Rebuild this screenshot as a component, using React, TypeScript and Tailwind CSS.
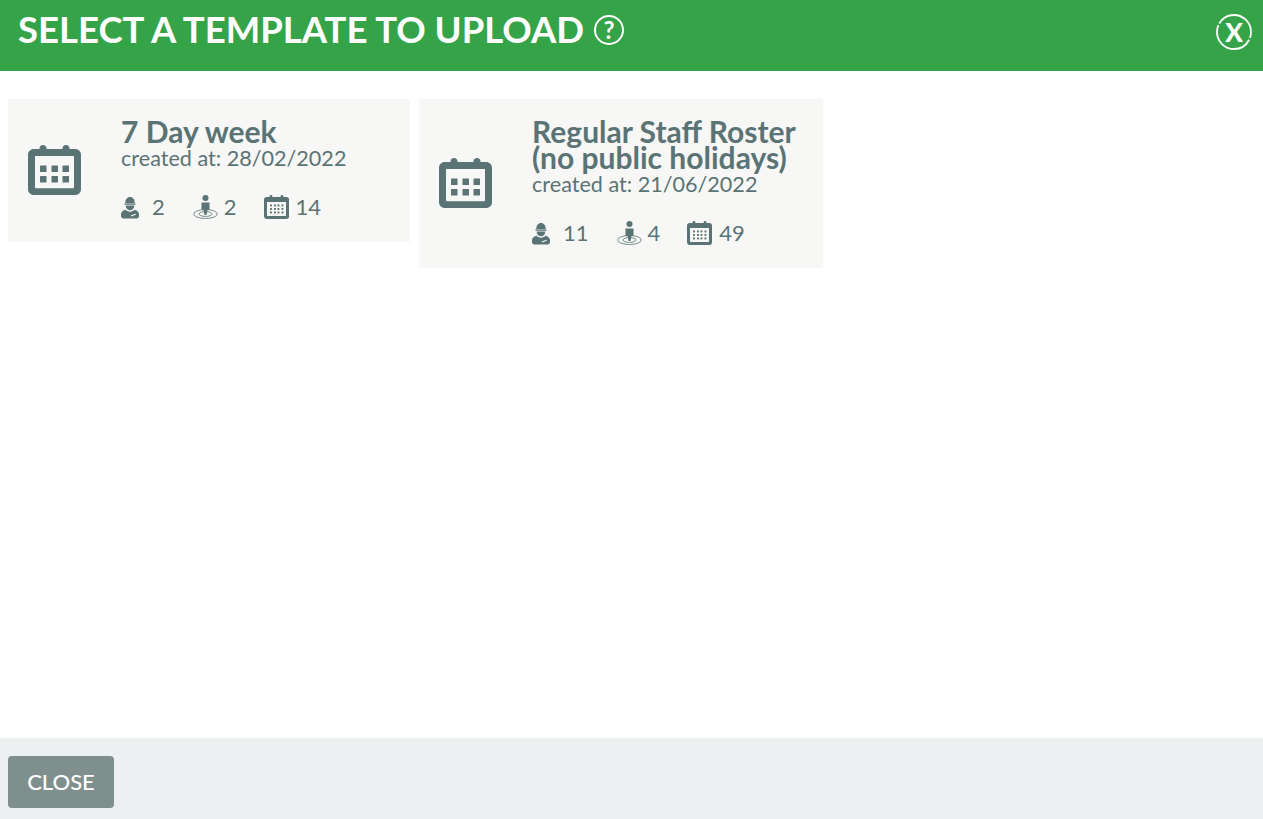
const CalendarIcon = ({ className }: { className: string }) => (
  <svg viewBox="0 0 53 50" className={className} fill="#5a7375">
    <path
      fillRule="evenodd"
      d="M15 0c2 0 3.500 1.500 3.500 3.500V4h16v-.5C34.500 1.500 36 0 38 0s3.500 1.500 3.500 3.500V4H47c3.500 0 6 2.500 6 6v34c0 3.500-2.500 6-6 6H6c-3.500 0-6-2.500-6-6V10c0-3.500 2.500-6 6-6h5.500v-.5C11.500 1.500 13 0 15 0zM7 11v31c0 .8.500 1.300 1.300 1.300h36.400c.8 0 1.300-.5 1.300-1.300V11z"
    />
    <rect x="12" y="20.500" width="6.500" height="6.500" rx="0.500" />
    <rect x="23.500" y="20.500" width="6.500" height="6.500" rx="0.500" />
    <rect x="34.500" y="20.500" width="6.500" height="6.500" rx="0.500" />
    <rect x="12" y="31" width="6.500" height="6.500" rx="0.500" />
    <rect x="23.500" y="31" width="6.500" height="6.500" rx="0.500" />
    <rect x="34.500" y="31" width="6.500" height="6.500" rx="0.500" />
  </svg>
);

const SmallCalendarIcon = () => (
  <svg viewBox="0 0 25 24" className="h-[24px] w-[25px] shrink-0" fill="#5a7375">
    <path
      fillRule="evenodd"
      d="M7 0c.8 0 1.400.6 1.400 1.400V2h8.200v-.6C16.600.6 17.200 0 18 0s1.400.6 1.400 1.400V2h3.100C23.900 2 25 3.100 25 4.500v17c0 1.400-1.100 2.500-2.500 2.500h-20C1.100 24 0 21.900 0 21.500v-17C0 3.100 1.100 2 2.500 2h3.100v-.6C5.600.6 6.200 0 7 0zM3 7v13.500c0 .3.200.5.500.5h18c.3 0 .5-.2.500-.5V7z"
    />
    {[6, 10, 13.500, 17.500].map((x) =>
      [9.500, 13, 16.500].map((y) => <rect key={`${x}-${y}`} x={x} y={y} width="1.900" height="1.900" />)
    )}
  </svg>
);

const WorkerIcon = () => (
  <svg viewBox="0 0 19 23" className="h-[23px] w-[18px] shrink-0" fill="#5a7375">
    <path d="M4.500 7C4.500 3 6.500.5 9.500.5S14.500 3 14.500 7z" />
    <rect x="3.500" y="7.300" width="12" height="1.200" rx="0.600" />
    <path d="M5 9.500h9c0 3-2 5-4.500 5S5 12.500 5 9.500z" />
    <path d="M4.500 14c1.300 1.200 3 2 5 2s3.700-.8 5-2c2.700.6 4.500 2.600 4.500 5v1.500c0 1.400-1.100 2.500-2.500 2.500h-14C1.100 23 0 21.900 0 20.500V19c0-2.400 1.800-4.400 4.500-5z" />
    <path d="M10.500 20.500l5-1.800" stroke="#f7f7f5" strokeWidth="1.200" fill="none" />
  </svg>
);

const LocationPersonIcon = () => (
  <svg viewBox="0 0 25 24" className="h-[24px] w-[25px] shrink-0" fill="#5a7375">
    <circle cx="12.500" cy="3" r="3" />
    <path d="M8.500 7.500h8v7.500h-2L13.500 20h-2l-1-5h-2z" />
    <ellipse cx="12.500" cy="19" rx="11.800" ry="4.500" fill="none" stroke="#5a7375" strokeWidth="0.800" />
    <ellipse cx="12.500" cy="19" rx="6.500" ry="2.400" fill="none" stroke="#5a7375" strokeWidth="0.800" />
  </svg>
);

const templates = [
  { lines: ['7 Day week'], date: '28/02/2022', workers: 2, places: 2, days: 14, width: 'w-[402px]' },
  {
    lines: ['Regular Staff Roster', '(no public holidays)'],
    date: '21/06/2022',
    workers: 11,
    places: 4,
    days: 49,
    width: 'w-[404px]',
  },
];

const TemplateCard = ({ lines, date, workers, places, days, width }: (typeof templates)[number]) => (
  <div className={`flex items-center bg-[#f7f7f5] pt-[19px] pb-[22px] pl-[20px] text-[#5a7375] ${width}`}>
    <CalendarIcon className="mt-[2px] h-[50px] w-[53px] shrink-0" />
    <div className="ml-[40px] min-w-0">
      <div className="text-[30px] leading-[26px] font-bold">
        {lines.map((line) => (
          <div key={line}>{line}</div>
        ))}
      </div>
      <div className="mt-[1px] text-[21.600px] leading-[27px]">created at: {date}</div>
      <div className="mt-[22px] flex h-[26px] items-center text-[22px] leading-[26px]">
        <WorkerIcon />
        <span className="ml-[13px] mr-[28px]">{workers}</span>
        <LocationPersonIcon />
        <span className="ml-[6px] mr-[27px]">{places}</span>
        <SmallCalendarIcon />
        <span className="ml-[7px]">{days}</span>
      </div>
    </div>
  </div>
);

export default function App() {
  return (
    <div className="flex h-[819px] flex-col bg-white font-['Lato',sans-serif]">
      <header className="flex h-[71px] shrink-0 items-start justify-between bg-[#35a449] pl-[18px] pr-[11px] text-white">
        <div className="flex items-center">
          <h1 className="text-[36.500px] leading-[59px] font-bold uppercase">Select a template to upload</h1>
          <span className="ml-[10px] flex h-[30px] w-[30px] items-center justify-center rounded-full border-2 border-white text-[24px] leading-none font-bold">
            ?
          </span>
        </div>
        <span className="mt-[14px] grid h-[36px] w-[36px] place-items-center">
          <svg viewBox="0 0 36 36" className="col-start-1 row-start-1 h-[36px] w-[36px]" fill="none">
            <circle cx="18" cy="18" r="17" stroke="#ffffff" strokeWidth="1.800" strokeDasharray="52 2 44 2" strokeDashoffset="-8" />
          </svg>
          <span className="col-start-1 row-start-1 text-[26px] leading-none font-black">X</span>
        </span>
      </header>

      <main className="flex flex-1 items-start gap-[9px] pl-[8px] pt-[28px]">
        {templates.map((t) => (
          <TemplateCard key={t.date} {...t} />
        ))}
      </main>

      <footer className="flex h-[81px] shrink-0 items-start bg-[#ecf0f1] px-[8px] pt-[18px]">
        <button className="h-[52px] w-[106px] rounded-[4px] bg-[#7f8f8e] pb-[2px] text-[22px] font-medium text-white">
          CLOSE
        </button>
      </footer>
    </div>
  );
}
